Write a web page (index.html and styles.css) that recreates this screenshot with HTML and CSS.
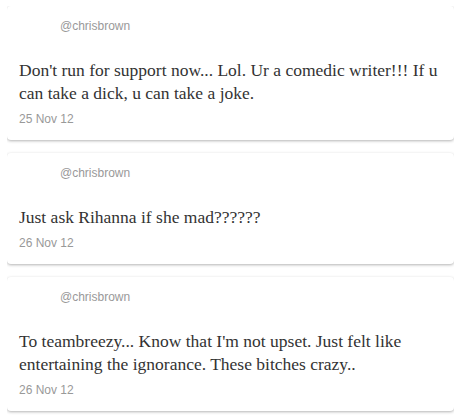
FILE: index.html
```html
<!DOCTYPE html>
<html lang="en">
   <head>
      <meta charset="UTF-8">
      <meta name="viewport" content="width=device-width, initial-scale=1.0">
      <title>Tweets</title>
      <link rel="stylesheet" href="styles.css">
   </head>
   <body>
      <div class="tweet">
         <div class="tweet-header">
            <div class="avatar"></div>
            <span class="username">@chrisbrown</span>
         </div>
         <p class="tweet-text">Don't run for support now... Lol. Ur a comedic writer!!! If u can take a dick, u can take a joke.</p>
         <div class="tweet-date">25 Nov 12</div>
      </div>
      <div class="tweet">
         <div class="tweet-header">
            <div class="avatar"></div>
            <span class="username">@chrisbrown</span>
         </div>
         <p class="tweet-text">Just ask Rihanna if she mad??????</p>
         <div class="tweet-date">26 Nov 12</div>
      </div>
      <div class="tweet">
         <div class="tweet-header">
            <div class="avatar"></div>
            <span class="username">@chrisbrown</span>
         </div>
         <p class="tweet-text">To teambreezy... Know that I'm not upset. Just felt like entertaining the ignorance. These bitches crazy..</p>
         <div class="tweet-date">26 Nov 12</div>
      </div>
   </body>
</html>
```

FILE: styles.css
```css
body {
margin: 6px 8px 0 7px;
background-color: #fff;
font-family: "Liberation Sans", Arial, sans-serif;
}
.tweet {
background-color: #fff;
border-radius: 4px;
box-shadow: 0 1px 3px rgba(0, 0, 0, 0.3);
padding: 13px 8px 14px 12px;
margin-bottom: 13px;
}
.tweet-header {
display: flex;
align-items: flex-start;
height: 40px;
}
.avatar {
width: 36px;
height: 36px;
margin-right: 5px;
}
.username {
font-size: 12px;
line-height: 14px;
color: #999;
}
.tweet-text {
margin: 0;
font-family: "Liberation Serif", Georgia, serif;
font-size: 17.5px;
line-height: 23px;
color: #333;
}
.tweet-date {
margin-top: 7px;
font-size: 12px;
line-height: 14px;
color: #999;
}
```
